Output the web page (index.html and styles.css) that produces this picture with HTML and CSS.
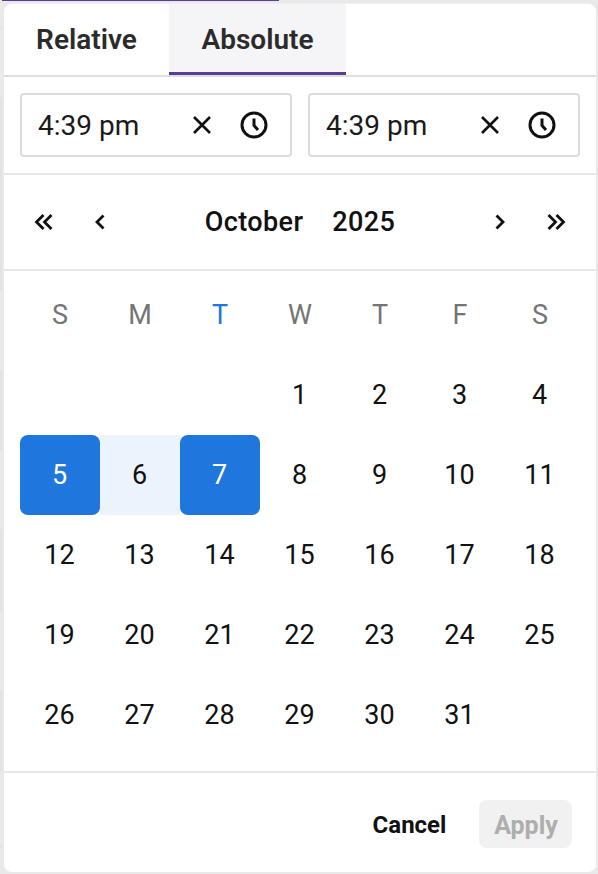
FILE: index.html
```html
<!DOCTYPE html>
<html lang="en">
<head>
<meta charset="utf-8">
<title>Date picker</title>
<link rel="stylesheet" href="styles.css">
</head>
<body>
<div class="backdrop-line"></div>
<div class="backdrop-edge"></div>
<div class="panel">
  <div class="tabs">
    <div class="tab tab-relative">Relative</div>
    <div class="tab tab-active">Absolute</div>
  </div>
  <div class="times">
    <div class="time-field">
      <span class="time-value">4:39 pm</span>
      <svg class="icon-x" width="24" height="24" viewBox="0 0 24 24"><path d="M4 4l16 16M20 4L4 20"/></svg>
      <svg class="icon-clock" width="28" height="28" viewBox="0 0 28 28"><circle cx="14" cy="14" r="12"/><path d="M14 7.500v7l4 4.500"/></svg>
    </div>
    <div class="time-field">
      <span class="time-value">4:39 pm</span>
      <svg class="icon-x" width="24" height="24" viewBox="0 0 24 24"><path d="M4 4l16 16M20 4L4 20"/></svg>
      <svg class="icon-clock" width="28" height="28" viewBox="0 0 28 28"><circle cx="14" cy="14" r="12"/><path d="M14 7.500v7l4 4.500"/></svg>
    </div>
  </div>
  <div class="month-nav">
    <div class="nav-group">
      <svg class="nav-icon" width="20" height="18" viewBox="0 0 20 18"><path d="M9.500 2L2.500 9l7 7M17.500 2l-7 7 7 7"/></svg>
      <svg class="nav-icon" width="12" height="18" viewBox="0 0 12 18"><path d="M9.500 2.500L3 9l6.500 6.500"/></svg>
    </div>
    <div class="month-title"><span>October</span><span>2025</span></div>
    <div class="nav-group">
      <svg class="nav-icon" width="12" height="18" viewBox="0 0 12 18"><path d="M2.500 2.500L9 9l-6.500 6.500"/></svg>
      <svg class="nav-icon" width="20" height="18" viewBox="0 0 20 18"><path d="M2.500 2l7 7-7 7M10.500 2l7 7-7 7"/></svg>
    </div>
  </div>
  <div class="calendar">
    <div class="cell head">S</div><div class="cell head">M</div><div class="cell head today-col">T</div><div class="cell head">W</div><div class="cell head">T</div><div class="cell head">F</div><div class="cell head">S</div>
    <div class="cell"></div><div class="cell"></div><div class="cell"></div><div class="cell">1</div><div class="cell">2</div><div class="cell">3</div><div class="cell">4</div>
    <div class="cell sel">5</div><div class="cell in-range">6</div><div class="cell sel">7</div><div class="cell">8</div><div class="cell">9</div><div class="cell">10</div><div class="cell">11</div>
    <div class="cell">12</div><div class="cell">13</div><div class="cell">14</div><div class="cell">15</div><div class="cell">16</div><div class="cell">17</div><div class="cell">18</div>
    <div class="cell">19</div><div class="cell">20</div><div class="cell">21</div><div class="cell">22</div><div class="cell">23</div><div class="cell">24</div><div class="cell">25</div>
    <div class="cell">26</div><div class="cell">27</div><div class="cell">28</div><div class="cell">29</div><div class="cell">30</div><div class="cell">31</div><div class="cell"></div>
  </div>
  <div class="footer">
    <button class="btn btn-cancel" type="button">Cancel</button>
    <button class="btn btn-apply" type="button" disabled>Apply</button>
  </div>
</div>
</body>
</html>
```
FILE: styles.css
```css
* { box-sizing: border-box; }
html, body { margin: 0; height: 874px; overflow: hidden; }
body {
  background: #e9e9ea;
  font-family: Roboto, "Liberation Sans", sans-serif;
  color: #111;
  padding: 3px 2px 2px 4px;
}
.backdrop-line {
  position: absolute;
  left: 0; top: 0;
  width: 279px; height: 1px;
  background: #5b3b96;
}
.backdrop-edge {
  position: absolute;
  left: 0; top: 0;
  width: 2px; height: 874px;
  background: linear-gradient(to bottom,
    #e9e9ea 0 28px, #dcdcdc 28px 29px, #e9e9ea 29px 97px,
    #dfe3e8 97px 290px, #e9e9ea 290px 370px,
    #dfe3e8 370px 450px, #e9e9ea 450px 529px, #dfe3e8 529px 611px,
    #e9e9ea 611px 690px, #dfe3e8 690px 771px, #e9e9ea 771px 846px,
    #dcdcdc 846px 847px, #e9e9ea 847px 874px);
}
.panel {
  position: relative;
  height: 869px;
  background: #fff;
  border-radius: 8px;
  border-top: 1px solid #f0f0f0;
  display: flex;
  flex-direction: column;
  overflow: hidden;
}
.tabs {
  display: flex;
  height: 73px;
  border-bottom: 2px solid #dedede;
  flex: none;
}
.tab {
  font-size: 28px;
  font-weight: 600;
  color: #2b2b2b;
  display: flex;
  align-items: center;
  justify-content: center;
  height: 71px;
}
.tab-relative { width: 165px; }
.tab-active {
  width: 177px;
  background: #f5f5f8;
  box-shadow: inset 0 -3px 0 #5b3b96;
}
.times {
  display: flex;
  gap: 16px;
  padding: 16px;
  height: 98px;
  flex: none;
  border-bottom: 2px solid #e8e8e8;
}
.time-field {
  flex: 1;
  height: 64px;
  border: 2px solid #dcdcdc;
  border-radius: 4px;
  display: flex;
  align-items: center;
  padding: 0 22px 0 16px;
}
.time-value {
  font-size: 28px;
  color: #1a1a1a;
  flex: 1;
}
.icon-x { margin-right: 26px; }
.icon-x path { fill: none; stroke: #111; stroke-width: 2.6; }
.icon-clock circle, .icon-clock path { fill: none; stroke: #111; stroke-width: 3; }
.month-nav {
  display: flex;
  align-items: center;
  justify-content: space-between;
  height: 96px;
  flex: none;
  padding: 0 30px;
  border-bottom: 2px solid #e8e8e8;
}
.nav-group { display: flex; align-items: center; gap: 40px; }
.nav-icon path { fill: none; stroke: #111; stroke-width: 2.8; }
.month-title {
  display: flex;
  gap: 29px;
  font-size: 27px;
  font-weight: 500;
  color: #111;
  letter-spacing: 0.4px;
}
.calendar {
  display: grid;
  grid-template-columns: repeat(7, 80px);
  grid-auto-rows: 80px;
  padding: 4px 16px 16px;
  height: 502px;
  flex: none;
  border-bottom: 2px solid #e8e8e8;
}
.cell {
  display: flex;
  align-items: center;
  justify-content: center;
  font-size: 27px;
  color: #111;
  padding-right: 1px;
}
.head { color: #757575; padding-right: 0; }
.today-col { color: #1f76dc; }
.sel { background: #1f76dc; color: #fff; border-radius: 8px; }
.in-range { background: #ebf3fd; }
.footer {
  flex: 1;
  display: flex;
  justify-content: flex-end;
  align-items: flex-start;
  gap: 23px;
  padding: 27px 24px 0 0;
}
.btn {
  font-family: inherit;
  font-size: 24px;
  font-weight: 700;
  height: 48px;
  border: 0;
  border-radius: 8px;
  background: none;
  padding: 2px 0 0;
}
.btn-cancel { width: 93px; color: #111; }
.btn-apply { width: 93px; background: #f1f1f1; color: #aeaeae; font-size: 25px; padding-left: 1px; }
```
